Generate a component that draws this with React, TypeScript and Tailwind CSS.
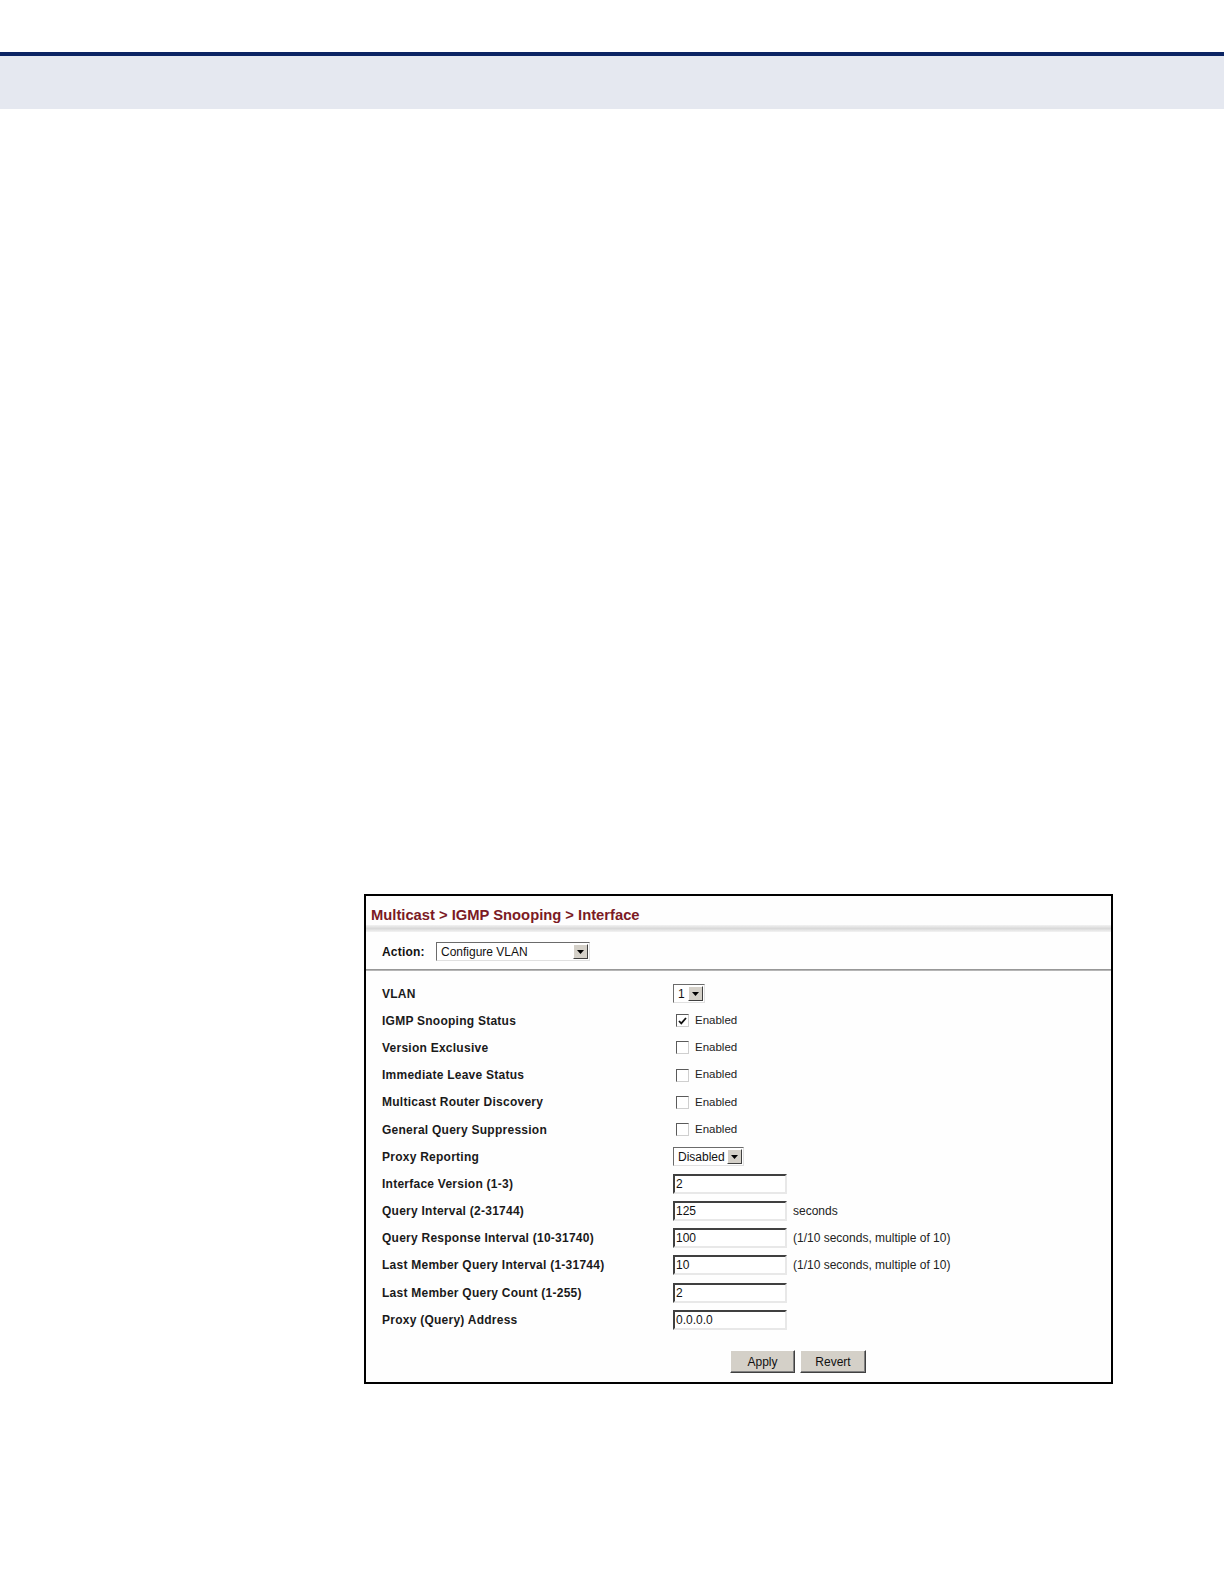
const font = { fontFamily: '"Liberation Sans", Arial, sans-serif' };

function Arrow() {
  return (
    <span className="flex h-full w-[15px] shrink-0 items-center justify-center border border-t-white border-l-white border-r-[#404040] border-b-[#404040] bg-[#d4d0c8]">
      <svg width="7" height="4" viewBox="0 0 7 4">
        <path d="M0 0h7L3.5 4z" fill="#000" />
      </svg>
    </span>
  );
}

function Select({ value, width }: { value: string; width: string }) {
  return (
    <div
      className={`flex h-[19px] items-stretch border border-t-[#6b6b6b] border-l-[#6b6b6b] border-r-[#e0e0e0] border-b-[#e0e0e0] bg-white p-px ${width}`}
    >
      <span className="flex flex-1 items-center pl-[3px] text-[12px] leading-none text-[#111]">{value}</span>
      <Arrow />
    </div>
  );
}

function TextBox({ value }: { value: string }) {
  return (
    <div className="flex h-[20px] w-[114px] items-center border-2 border-t-[#404040] border-l-[#404040] border-r-[#e8e8e8] border-b-[#e8e8e8] bg-white pl-[1px] text-[12px] leading-none text-[#111]">
      {value}
    </div>
  );
}

function Check({ checked }: { checked?: boolean }) {
  return (
    <div className="flex items-center">
      <span className="ml-[3px] flex h-[13px] w-[13px] items-center justify-center border border-t-[#5a5a5a] border-l-[#5a5a5a] border-r-[#cfcfcf] border-b-[#cfcfcf] bg-white">
        {checked && (
          <svg width="9" height="8" viewBox="0 0 9 8">
            <path d="M1 4l2.3 2.4L8 1" stroke="#111" strokeWidth="1.8" fill="none" />
          </svg>
        )}
      </span>
      <span className="ml-[6px] text-[11.5px] leading-none text-[#222]">Enabled</span>
    </div>
  );
}

type Row = { label: string; field: React.ReactNode; note?: string };

const rows: Row[] = [
  { label: 'VLAN', field: <Select value="1" width="w-[32px]" /> },
  { label: 'IGMP Snooping Status', field: <Check checked /> },
  { label: 'Version Exclusive', field: <Check /> },
  { label: 'Immediate Leave Status', field: <Check /> },
  { label: 'Multicast Router Discovery', field: <Check /> },
  { label: 'General Query Suppression', field: <Check /> },
  { label: 'Proxy Reporting', field: <Select value="Disabled" width="w-[71px]" /> },
  { label: 'Interface Version (1-3)', field: <TextBox value="2" /> },
  { label: 'Query Interval (2-31744)', field: <TextBox value="125" />, note: 'seconds' },
  { label: 'Query Response Interval (10-31740)', field: <TextBox value="100" />, note: '(1/10 seconds, multiple of 10)' },
  { label: 'Last Member Query Interval (1-31744)', field: <TextBox value="10" />, note: '(1/10 seconds, multiple of 10)' },
  { label: 'Last Member Query Count (1-255)', field: <TextBox value="2" /> },
  { label: 'Proxy (Query) Address', field: <TextBox value="0.0.0.0" /> },
];

function Button({ children, width }: { children: React.ReactNode; width: string }) {
  return (
    <button
      className={`flex h-[23px] items-center justify-center border border-t-white border-l-white border-r-[#404040] border-b-[#404040] bg-[#d4d0c8] text-[12px] text-[#111] shadow-[inset_-1px_-1px_0_#808080] ${width}`}
    >
      {children}
    </button>
  );
}

export default function App() {
  return (
    <div className="min-h-[1584px] w-[1224px] bg-white" style={font}>
      {/* page header */}
      <div className="h-[52px]" />
      <div className="h-[4px] bg-[#0b2463]" />
      <div className="h-[53px] bg-[#e5e8f0]" />

      {/* screenshot frame */}
      <div className="ml-[364px] mt-[785px] w-[749px] border-2 border-black bg-[#fefefe]">
        <div className="h-[29px] pl-[5px] pt-[11px] text-[14.75px] font-bold leading-[16px] text-[#7b1a24]">
          Multicast &gt; IGMP Snooping &gt; Interface
        </div>
        <div className="h-[7px] bg-gradient-to-b from-[#f2f2f2] via-[#d9d9d9] to-[#f3f3f3]" />

        <div className="flex items-center pb-[8px] pl-[16px] pt-[10px]">
          <span className="w-[54px] text-[12px] font-bold leading-none tracking-[0.2px] text-[#111]">Action:</span>
          <Select value="Configure VLAN" width="w-[154px]" />
        </div>
        <div className="h-[2px] bg-gradient-to-b from-[#8a8a8a] to-[#c4c4c4]" />

        <div className="pt-[9px]">
          {rows.map((r) => (
            <div key={r.label} className="flex h-[27.2px] items-center">
              <span className="w-[307px] pl-[16px] text-[12px] font-bold leading-none tracking-[0.25px] text-[#1a1a1a]">
                {r.label}
              </span>
              {r.field}
              {r.note && <span className="ml-[6px] text-[12px] leading-none text-[#222]">{r.note}</span>}
            </div>
          ))}
        </div>

        <div className="flex gap-[5px] pb-[9px] pl-[364px] pt-[17px]">
          <Button width="w-[65px]">Apply</Button>
          <Button width="w-[66px]">Revert</Button>
        </div>
      </div>
    </div>
  );
}
